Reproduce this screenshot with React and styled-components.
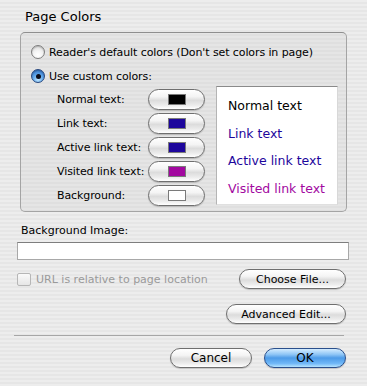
import React from "react";
import styled, { createGlobalStyle, css } from "styled-components";

const GlobalStyle = createGlobalStyle`
  html, body {
    margin: 0;
    padding: 0;
  }
  body {
    font-family: "DejaVu Sans", "Liberation Sans", sans-serif;
    color: #000;
  }
`;

const Sheet = styled.div`
  width: 367px;
  height: 386px;
  box-sizing: border-box;
  padding: 10px 19px 0 17px;
  background: repeating-linear-gradient(
    to bottom,
    #ededed 0px,
    #ededed 2px,
    #e6e6e6 2px,
    #e6e6e6 4px
  );
  display: flex;
  flex-direction: column;
`;

const Title = styled.div`
  font-size: 13px;
  margin-left: 8px;
  height: 22px;
  line-height: 14px;
`;

const GroupBox = styled.div`
  margin-left: 3px;
  width: 327px;
  height: 180px;
  box-sizing: border-box;
  border: 1px solid #a4a4a4;
  border-top-color: #8e8e8e;
  border-radius: 5px;
  background: rgba(200, 200, 200, 0.22);
  padding: 7px 0 0 10px;
`;

const RadioRow = styled.label`
  display: flex;
  align-items: center;
  gap: 4px;
  height: 24px;
  font-size: 11px;
  letter-spacing: -0.1px;
`;

const Radio = styled.span`
  width: 14px;
  height: 14px;
  border-radius: 50%;
  box-sizing: border-box;
  display: flex;
  align-items: center;
  justify-content: center;
  border: 1px solid #7d7d7d;
  background: radial-gradient(circle at 50% 75%, #ffffff 0%, #f4f4f4 40%, #cfcfcf 100%);
  box-shadow: inset 0 1px 1px rgba(0, 0, 0, 0.2);
  ${(p) =>
    p.$checked &&
    css`
      border-color: #27477e;
      background: radial-gradient(circle at 50% 80%, #bfe6ff 0%, #5fa6ea 45%, #2764b8 100%);
      &::after {
        content: "";
        width: 5px;
        height: 5px;
        border-radius: 50%;
        background: #0d0d1a;
      }
    `}
`;

const ColorsArea = styled.div`
  display: flex;
  margin-top: 1px;
`;

const ColorList = styled.div`
  display: flex;
  flex-direction: column;
  gap: 3px;
  width: 185px;
  padding-left: 26px;
  box-sizing: border-box;
`;

const ColorRow = styled.div`
  display: flex;
  align-items: center;
  height: 21px;
`;

const ColorLabel = styled.span`
  width: 91px;
  font-size: 11px;
  letter-spacing: -0.1px;
`;

const PillButton = styled.button`
  font-family: inherit;
  font-size: ${(p) => p.$fs || 11}px;
  color: #000;
  height: ${(p) => p.$h || 21}px;
  width: ${(p) => p.$w}px;
  padding: 0;
  box-sizing: border-box;
  border: 1px solid #6f6f6f;
  border-radius: 11px;
  background: linear-gradient(
    to bottom,
    #ffffff 0%,
    #f4f4f4 35%,
    #dcdcdc 55%,
    #ececec 80%,
    #ffffff 100%
  );
  box-shadow: 0 1px 1px rgba(0, 0, 0, 0.18);
  display: flex;
  align-items: center;
  justify-content: center;
  ${(p) =>
    p.$primary &&
    css`
      border-color: #2a4f8c;
      background: linear-gradient(
        to bottom,
        #d4ecff 0%,
        #8fc6f6 30%,
        #4d9be8 50%,
        #6fb7f7 80%,
        #b6e4ff 100%
      );
    `}
`;

const Swatch = styled.span`
  width: 18px;
  height: 11px;
  background: ${(p) => p.$color};
  border: 1px solid #7a7a7a;
  box-sizing: border-box;
`;

const Preview = styled.div`
  width: 122px;
  height: 119px;
  margin-top: -3px;
  box-sizing: border-box;
  background: #fff;
  border-top: 1px solid #8a8a8a;
  border-left: 1px solid #b4b4b4;
  border-right: 1px solid #d8d8d8;
  border-bottom: 1px solid #e0e0e0;
  padding: 10px 0 0 11px;
  display: flex;
  flex-direction: column;
  gap: 9px;
`;

const PreviewText = styled.div`
  font-size: 12.5px;
  line-height: 18.5px;
  color: ${(p) => p.$color};
`;

const FieldLabel = styled.div`
  font-size: 11px;
  margin: 12px 0 0 4px;
  height: 16px;
`;

const TextField = styled.div`
  height: 18px;
  width: 332px;
  margin-top: 2px;
  box-sizing: border-box;
  background: #fff;
  border: 1px solid #a8a8a8;
  border-top-color: #7e7e7e;
`;

const OptionRow = styled.div`
  display: flex;
  align-items: center;
  justify-content: space-between;
  margin-top: 9px;
  padding-right: 2px;
`;

const CheckLabel = styled.label`
  display: flex;
  align-items: center;
  gap: 5px;
  font-size: 11px;
  color: #9a9a9a;
`;

const CheckBox = styled.span`
  width: 14px;
  height: 13px;
  box-sizing: border-box;
  border: 1px solid #b6b6b6;
  border-radius: 2px;
  background: linear-gradient(to bottom, #fafafa, #e6e6e6);
`;

const RightRow = styled.div`
  display: flex;
  justify-content: flex-end;
  gap: 12px;
  padding-right: 2px;
  margin-top: ${(p) => p.$mt}px;
`;

const Separator = styled.hr`
  border: none;
  border-top: 1px solid #a6a6a6;
  margin: 11px 4px 0 -3px;
`;

const colors = [
  { label: "Normal text:", color: "#000000" },
  { label: "Link text:", color: "#1d069c" },
  { label: "Active link text:", color: "#1d069c" },
  { label: "Visited link text:", color: "#a2089f" },
  { label: "Background:", color: "#ffffff" },
];

const App = () => {
  return (
    <Sheet>
      <GlobalStyle />
      <Title>Page Colors</Title>
      <GroupBox>
        <RadioRow>
          <Radio />
          Reader's default colors (Don't set colors in page)
        </RadioRow>
        <RadioRow>
          <Radio $checked />
          Use custom colors:
        </RadioRow>
        <ColorsArea>
          <ColorList>
            {colors.map((c) => (
              <ColorRow key={c.label}>
                <ColorLabel>{c.label}</ColorLabel>
                <PillButton $w={57}>
                  <Swatch $color={c.color} />
                </PillButton>
              </ColorRow>
            ))}
          </ColorList>
          <Preview>
            <PreviewText $color="#000">Normal text</PreviewText>
            <PreviewText $color="#1d069c">Link text</PreviewText>
            <PreviewText $color="#1d069c">Active link text</PreviewText>
            <PreviewText $color="#a2089f">Visited link text</PreviewText>
          </Preview>
        </ColorsArea>
      </GroupBox>
      <FieldLabel>Background Image:</FieldLabel>
      <TextField />
      <OptionRow>
        <CheckLabel>
          <CheckBox />
          URL is relative to page location
        </CheckLabel>
        <PillButton $w={107} $h={20}>Choose File...</PillButton>
      </OptionRow>
      <RightRow $mt={15}>
        <PillButton $w={120} $h={20}>Advanced Edit...</PillButton>
      </RightRow>
      <Separator />
      <RightRow $mt={12}>
        <PillButton $w={82} $h={20} $fs={12}>Cancel</PillButton>
        <PillButton $w={82} $h={20} $fs={12} $primary>OK</PillButton>
      </RightRow>
    </Sheet>
  );
};

export default App;
